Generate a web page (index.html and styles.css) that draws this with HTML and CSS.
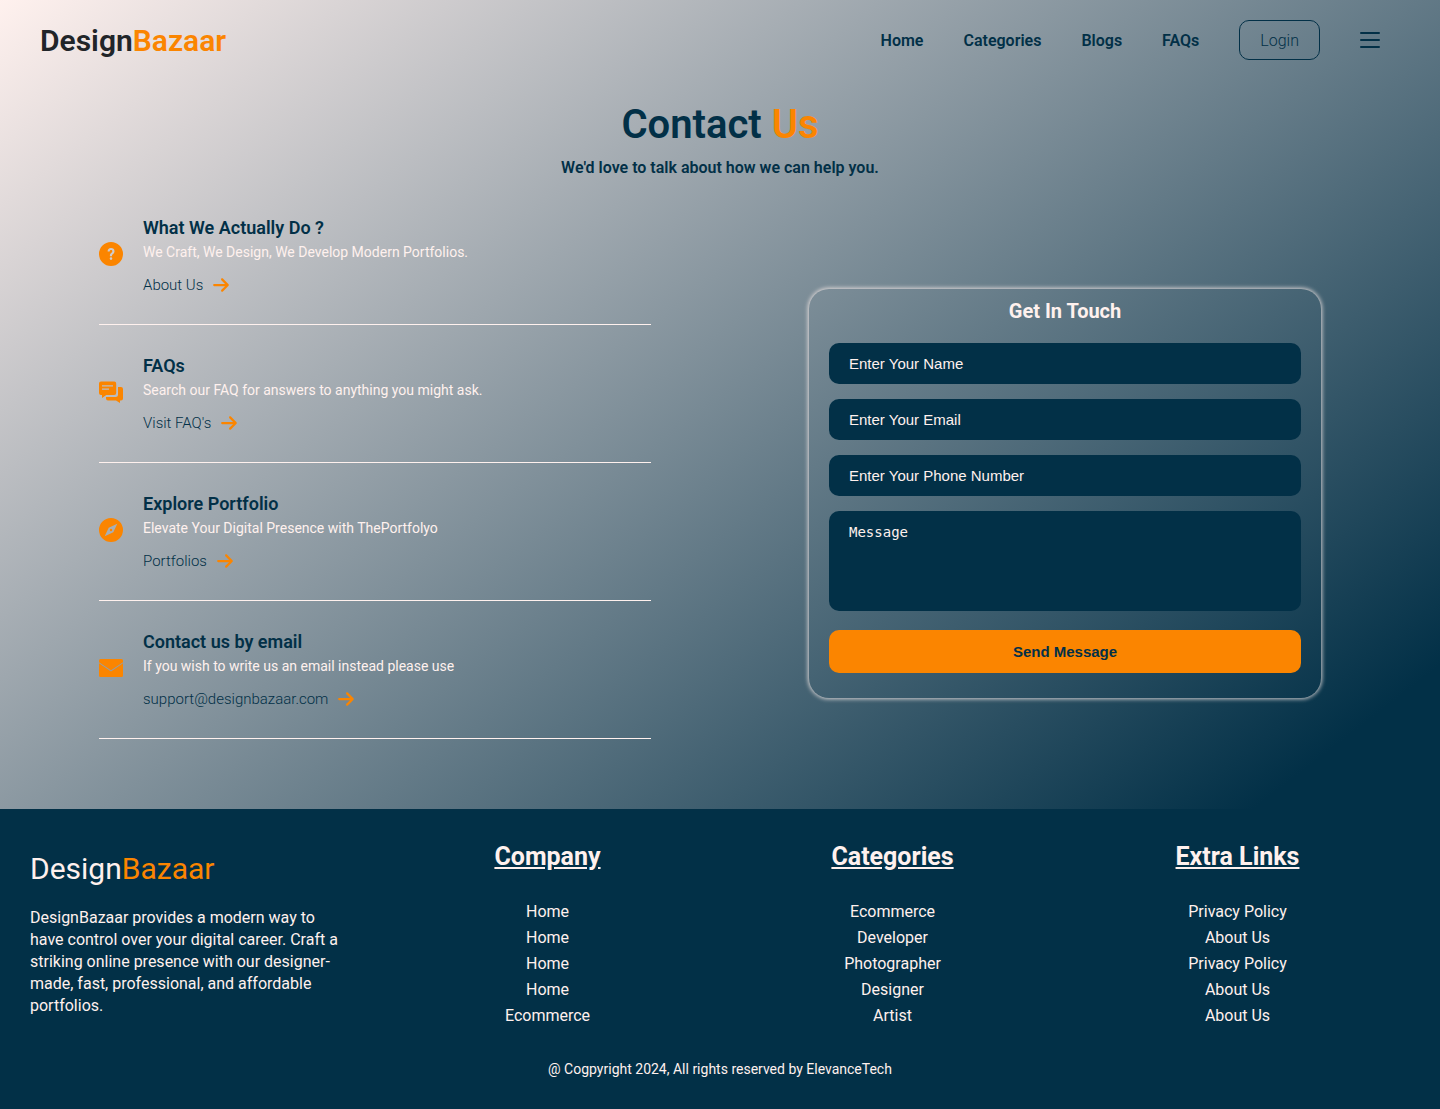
FILE: index.html
```html
<!DOCTYPE html>
<html lang="en">
<head>
  <meta charset="utf-8">
  <meta name="viewport" content="width=device-width, initial-scale=1">
  <title>DesignBazaar - Contact Us</title>
  <link rel="stylesheet" href="styles.css">
</head>
<body>
  <svg class="sprite" aria-hidden="true">
    <symbol id="arrow" viewBox="0 0 448 512">
      <path d="M438.6 278.6c12.5-12.5 12.5-32.8 0-45.3l-160-160c-12.5-12.5-32.8-12.5-45.3 0s-12.5 32.8 0 45.3L338.8 224 32 224c-17.7 0-32 14.3-32 32s14.3 32 32 32l306.7 0L233.4 393.4c-12.5 12.5-12.5 32.8 0 45.3s32.8 12.5 45.3 0l160-160z"/>
    </symbol>
  </svg>

  <header class="navbar">
    <a class="logo" href="#">Design<span class="accent">Bazaar</span></a>
    <nav class="menu">
      <a class="menu-link" href="#">Home</a>
      <a class="menu-link" href="#">Categories</a>
      <a class="menu-link" href="#">Blogs</a>
      <a class="menu-link" href="#">FAQs</a>
      <button class="login" type="button">Login</button>
      <button class="burger" type="button" aria-label="Open menu">
        <svg width="20" height="16" viewBox="0 0 20 16"><path d="M1 1h18M1 8h18M1 15h18" fill="none" stroke="currentColor" stroke-width="2" stroke-linecap="round"/></svg>
      </button>
    </nav>
  </header>

  <main>
    <div class="heading">
      <h1 class="title">Contact <span class="accent">Us</span></h1>
      <p class="subtitle">We'd love to talk about how we can help you.</p>
    </div>

    <div class="contact">
      <ul class="info">
        <li class="info-item">
          <svg class="info-icon" viewBox="0 0 24 24"><path fill-rule="evenodd" d="M12 0a12 12 0 1 1 0 24a12 12 0 0 1 0-24zM8.600 9.600h2.100c0-1 .5-1.600 1.300-1.600s1.300.5 1.300 1.300c0 .8-.4 1.200-1.100 1.700-.9.700-1.300 1.300-1.300 2.500v.7h2.100v-.4c0-.9.3-1.200 1.100-1.800.9-.7 1.400-1.500 1.400-2.700 0-2-1.500-3.200-3.500-3.200-2.100 0-3.400 1.400-3.400 3.500zM12 15.300a1.300 1.300 0 1 0 0 2.600a1.300 1.300 0 0 0 0-2.600z"/></svg>
          <div>
            <h2 class="info-title">What We Actually Do ?</h2>
            <p class="info-text">We Craft, We Design, We Develop Modern Portfolios.</p>
            <a class="info-link" href="#">About Us <svg class="arrow"><use href="#arrow"/></svg></a>
          </div>
        </li>
        <li class="info-item">
          <svg class="info-icon" viewBox="0 0 24 24"><path fill-rule="evenodd" d="M2 1.500h13.200a2 2 0 0 1 2 2v9.500a2 2 0 0 1-2 2H7.300L3 18v-3H2a2 2 0 0 1-2-2V3.500a2 2 0 0 1 2-2zM3 5.200v1.300h11V5.200zM3 8.400v1.300h7V8.400z"/><path d="M19 7h3a2 2 0 0 1 2 2v9.500a2 2 0 0 1-2 2h-1V23l-4-2.500H9a2 2 0 0 1-2-2V17h9.500a2.500 2.500 0 0 0 2.500-2.500z"/></svg>
          <div>
            <h2 class="info-title">FAQs</h2>
            <p class="info-text">Search our FAQ for answers to anything you might ask.</p>
            <a class="info-link" href="#">Visit FAQ's <svg class="arrow"><use href="#arrow"/></svg></a>
          </div>
        </li>
        <li class="info-item">
          <svg class="info-icon" viewBox="0 0 24 24"><path fill-rule="evenodd" d="M12 0a12 12 0 1 1 0 24a12 12 0 0 1 0-24zM18.300 5.700L9.700 9.700L5.700 18.300L14.300 14.300zM12 10.800a1.200 1.200 0 1 1 0 2.400a1.200 1.200 0 0 1 0-2.400z"/></svg>
          <div>
            <h2 class="info-title">Explore Portfolio</h2>
            <p class="info-text">Elevate Your Digital Presence with ThePortfolyo</p>
            <a class="info-link" href="#">Portfolios <svg class="arrow"><use href="#arrow"/></svg></a>
          </div>
        </li>
        <li class="info-item">
          <svg class="info-icon" viewBox="0 0 24 24"><path d="M1.500 3h21A1.500 1.500 0 0 1 24 4.500v1.700l-12 8.100L0 6.200V4.500A1.500 1.500 0 0 1 1.500 3z"/><path d="M0 7.300l12 8.100 12-8.100v12.200a1.500 1.500 0 0 1-1.500 1.500h-21A1.500 1.500 0 0 1 0 19.500z"/></svg>
          <div>
            <h2 class="info-title">Contact us by email</h2>
            <p class="info-text">If you wish to write us an email instead please use</p>
            <a class="info-link" href="#">support@designbazaar.com <svg class="arrow"><use href="#arrow"/></svg></a>
          </div>
        </li>
      </ul>

      <form class="card">
        <h2 class="card-title">Get In Touch</h2>
        <input class="field" type="text" placeholder="Enter Your Name" aria-label="Your name">
        <input class="field" type="email" placeholder="Enter Your Email" aria-label="Your email">
        <input class="field" type="tel" placeholder="Enter Your Phone Number" aria-label="Your phone number">
        <textarea class="field message" placeholder="Message" aria-label="Message"></textarea>
        <button class="send" type="submit">Send Message</button>
      </form>
    </div>
  </main>

  <footer class="footer">
    <div class="footer-grid">
      <div class="about">
        <a class="footer-logo" href="#">Design<span class="accent">Bazaar</span></a>
        <p class="about-text">DesignBazaar provides a modern way to have control over your digital career. Craft a striking online presence with our designer-made, fast, professional, and affordable portfolios.</p>
      </div>
      <div class="footer-col">
        <h2 class="footer-title">Company</h2>
        <a href="#">Home</a>
        <a href="#">Home</a>
        <a href="#">Home</a>
        <a href="#">Home</a>
        <a href="#">Ecommerce</a>
      </div>
      <div class="footer-col">
        <h2 class="footer-title">Categories</h2>
        <a href="#">Ecommerce</a>
        <a href="#">Developer</a>
        <a href="#">Photographer</a>
        <a href="#">Designer</a>
        <a href="#">Artist</a>
      </div>
      <div class="footer-col">
        <h2 class="footer-title">Extra Links</h2>
        <a href="#">Privacy Policy</a>
        <a href="#">About Us</a>
        <a href="#">Privacy Policy</a>
        <a href="#">About Us</a>
        <a href="#">About Us</a>
      </div>
    </div>
    <p class="copyright">@ Cogpyright 2024, All rights reserved by ElevanceTech</p>
  </footer>
</body>
</html>
```
FILE: styles.css
```css
:root {
  --navy: #023047;
  --orange: #fb8500;
  --light: #fff1ee;
}

* {
  box-sizing: border-box;
  margin: 0;
  padding: 0;
}

body {
  display: flex;
  flex-direction: column;
  min-height: 100vh;
  font-family: Roboto, sans-serif;
  font-size: 16px;
  color: var(--navy);
  background: linear-gradient(to right bottom, var(--light), var(--navy) 80%);
}

a {
  color: inherit;
  text-decoration: none;
}

button {
  font-family: inherit;
  color: inherit;
  background: none;
  border: none;
  cursor: pointer;
}

.sprite {
  display: none;
}

.accent {
  color: var(--orange);
}

.navbar {
  display: flex;
  align-items: center;
  justify-content: space-between;
  height: 80px;
  padding: 0 60px 0 40px;
}

.logo {
  font-size: 30px;
  font-weight: 600;
  color: #212529;
}

.menu {
  display: flex;
  align-items: center;
  gap: 40px;
}

.menu-link {
  font-weight: 600;
}

.login {
  height: 40px;
  padding: 0 20px;
  font-size: 16px;
  font-weight: 300;
  border: 1px solid var(--navy);
  border-radius: 10px;
}

.burger,
.burger svg {
  display: block;
}

.heading {
  padding-top: 20px;
  text-align: center;
}

.title {
  font-size: 40px;
  font-weight: 600;
  line-height: 50px;
}

.subtitle {
  margin-top: 8px;
  font-weight: 600;
  line-height: 19px;
}

.contact {
  display: grid;
  grid-template-columns: 1fr 1fr;
  place-items: center;
  margin-top: 10px;
  padding: 0 30px 10px;
}

.info {
  width: 80%;
  padding-bottom: 60px;
  list-style: none;
}

.info-item {
  display: flex;
  align-items: center;
  gap: 20px;
  padding: 30px 0;
  border-bottom: 1px solid var(--light);
}

.info-icon {
  flex: none;
  width: 24px;
  height: 24px;
  margin-bottom: 3px;
  fill: var(--orange);
}

.info-title {
  font-size: 18px;
  font-weight: 600;
  line-height: 22px;
}

.info-text {
  margin-top: 4px;
  font-size: 14px;
  line-height: 18px;
  color: var(--light);
}

.info-link {
  display: flex;
  align-items: center;
  gap: 10px;
  margin-top: 15px;
  font-size: 15px;
  font-weight: 300;
  line-height: 18px;
}

.arrow {
  width: 16px;
  height: 18px;
  fill: var(--orange);
}

.card {
  display: flex;
  flex-direction: column;
  gap: 15px;
  width: 100%;
  max-width: 512px;
  padding: 10px 20px 25px;
  border-radius: 20px;
  box-shadow: 0 0 4px 1px rgba(255, 241, 238, 0.8);
}

.card-title {
  margin-bottom: 5px;
  font-size: 20px;
  font-weight: 700;
  line-height: 24px;
  text-align: center;
  color: var(--light);
}

.field {
  width: 100%;
  height: 41px;
  padding: 12px 20px;
  font-family: "Liberation Sans", Arial, sans-serif;
  font-size: 15px;
  color: var(--light);
  background: var(--navy);
  border: none;
  border-radius: 10px;
}

.field::placeholder {
  color: var(--light);
  opacity: 1;
}

.message {
  height: 100px;
  font-family: "DejaVu Sans Mono", monospace;
  font-size: 14px;
  line-height: 18px;
  resize: none;
}

.send {
  height: 43px;
  margin-top: 4px;
  font-family: "Liberation Sans", Arial, sans-serif;
  font-size: 15px;
  font-weight: 700;
  background: var(--orange);
  border-radius: 10px;
}

.footer {
  flex: 1;
  padding: 30px 30px 25px;
  color: var(--light);
  background: var(--navy);
}

.footer-grid {
  display: grid;
  grid-template-columns: repeat(4, 1fr);
}

.about {
  padding: 10px 35px 0 0;
}

.footer-logo {
  display: block;
  font-size: 30px;
  line-height: 40px;
}

.about-text {
  margin-top: 18px;
  line-height: 22px;
}

.footer-col {
  display: flex;
  flex-direction: column;
  align-items: center;
  line-height: 26px;
}

.footer-title {
  margin-bottom: 24px;
  font-size: 25px;
  font-weight: 700;
  line-height: 36px;
  text-decoration: underline;
}

.copyright {
  margin-top: 30px;
  font-size: 14px;
  line-height: 20px;
  text-align: center;
}
```
